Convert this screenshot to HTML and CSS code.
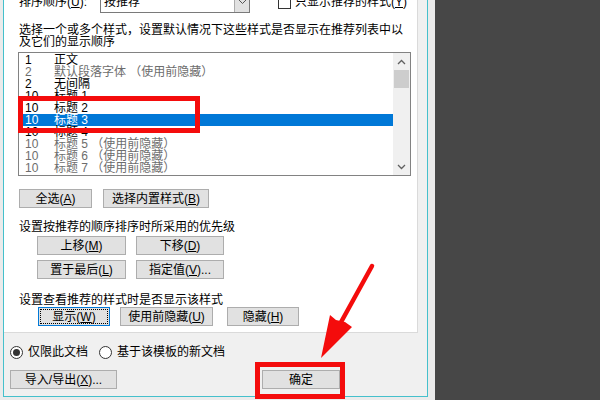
FILE: index.html
```html
<!DOCTYPE html>
<html lang="zh-CN">
<head>
<meta charset="utf-8">
<title>管理样式</title>
<link rel="stylesheet" href="styles.css">
</head>
<body>
<div class="screen">
  <div class="win">
    <div class="dialog">
      <div class="page">
        <div class="row-top">
          <span class="lbl-sort">排序顺序(<u>U</u>):</span>
          <div class="combo">
            <span class="combo-text">按推荐</span>
            <span class="combo-btn"><svg width="9" height="6" viewBox="0 0 9 6"><path d="M1 1l3.5 3.5L8 1" fill="none" stroke="#555" stroke-width="1"/></svg></span>
          </div>
          <div class="chk"><span class="box"></span><span>只显示推荐的样式(<u>Y</u>)</span></div>
        </div>
        <p class="desc">选择一个或多个样式，设置默认情况下这些样式是否显示在推荐列表中以<br>及它们的显示顺序</p>
        <div class="list">
          <div class="items">
            <div class="item"><span class="num">1</span><span>正文</span></div>
            <div class="item gray"><span class="num">2</span><span>默认段落字体 （使用前隐藏）</span></div>
            <div class="item"><span class="num">2</span><span>无间隔</span></div>
            <div class="item"><span class="num">10</span><span>标题 1</span></div>
            <div class="item"><span class="num">10</span><span>标题 2</span></div>
            <div class="item sel"><span class="num">10</span><span>标题 3</span></div>
            <div class="item"><span class="num">10</span><span>标题 4</span></div>
            <div class="item gray"><span class="num">10</span><span>标题 5 （使用前隐藏）</span></div>
            <div class="item gray"><span class="num">10</span><span>标题 6 （使用前隐藏）</span></div>
            <div class="item gray"><span class="num">10</span><span>标题 7 （使用前隐藏）</span></div>
          </div>
          <div class="vscroll">
            <div class="sb-arrow"><svg width="9" height="6" viewBox="0 0 9 6"><path d="M1 5l3.5-3.5L8 5" fill="none" stroke="#606060" stroke-width="1.3"/></svg></div>
            <div class="thumb"></div>
            <div class="sb-track"></div>
            <div class="sb-arrow"><svg width="9" height="6" viewBox="0 0 9 6"><path d="M1 1l3.5 3.5L8 1" fill="none" stroke="#606060" stroke-width="1.3"/></svg></div>
          </div>
        </div>
        <div class="row1">
          <div class="btn w73">全选(<u>A</u>)</div>
          <div class="btn w106">选择内置样式(<u>B</u>)</div>
        </div>
        <p class="lbl2">设置按推荐的顺序排序时所采用的优先级</p>
        <div class="grid">
          <div class="btn">上移(<u>M</u>)</div>
          <div class="btn">下移(<u>D</u>)</div>
          <div class="btn">置于最后(<u>L</u>)</div>
          <div class="btn">指定值(<u>V</u>)...</div>
        </div>
        <p class="lbl3">设置查看推荐的样式时是否显示该样式</p>
        <div class="row3">
          <div class="btn focus w72">显示(<u>W</u>)</div>
          <div class="btn w93 ml10">使用前隐藏(<u>U</u>)</div>
          <div class="btn w72 ml14">隐藏(<u>H</u>)</div>
        </div>
      </div>
      <div class="footer">
        <div class="radios">
          <span class="radio on"></span><span class="rtext">仅限此文档</span>
          <span class="radio r2"></span><span class="rtext">基于该模板的新文档</span>
        </div>
        <div class="bottom">
          <div class="btn w107">导入/导出(<u>X</u>)...</div>
          <div class="btn w78 ok">确定</div>
        </div>
      </div>
    </div>
  </div>
  <div class="dark"></div>
</div>
<div class="mark m1"></div>
<div class="mark m2"></div>
<svg class="arrow" width="600" height="400" viewBox="0 0 600 400">
  <line x1="372" y1="266" x2="340" y2="324" stroke="#f40c0c" stroke-width="4.5" stroke-linecap="round"/>
  <polygon points="321,358 330,315 336,320 345,322 352,327" fill="#f40c0c"/>
</svg>
</body>
</html>
```
FILE: styles.css
```css
* { box-sizing: border-box; margin: 0; padding: 0; }
html, body { width: 600px; height: 400px; overflow: hidden; }
body {
  font: 12px/12px "Liberation Sans", "Noto Sans CJK SC", sans-serif;
  color: #000;
  background: #474747;
  position: relative;
}
u { text-decoration: underline; text-underline-offset: 1px; }

.screen { display: flex; height: 400px; }
.win { width: 435px; flex: none; background: #ebebeb; padding: 0 7px 3px 3px; }
.dark { flex: 1; background: #474747; }

.dialog {
  height: 397px;
  border: 1px solid #45c0cc;
  border-top: 0;
  background: #f0f0f0;
  display: flex;
  flex-direction: column;
}

.page {
  height: 333px;
  width: 414px;
  flex: none;
  background: #fff;
  border-right: 1px solid #dadada;
  border-bottom: 1px solid #dadada;
  padding-left: 15px;
  overflow: hidden;
  white-space: nowrap;
}

.row-top { display: flex; align-items: center; height: 22px; margin-top: -9px; }
.lbl-sort { width: 81px; }
.combo {
  width: 150px; height: 21px;
  border: 1px solid #7a7a7a;
  background: #fff;
  display: flex; align-items: center;
}
.combo-text { flex: 1; padding-left: 3px; }
.combo-btn {
  width: 15px; height: 19px;
  background: #e1e1e1;
  border-left: 1px solid #acacac;
  display: flex; align-items: center; justify-content: center;
}
.chk { display: flex; align-items: center; margin-left: 28px; gap: 4px; }
.box { width: 13px; height: 13px; border: 1px solid #333; background: #fff; }

.desc { margin-top: 11px; }

.list {
  margin: 4px 0 0 -1px;
  width: 393px; height: 124px;
  border: 1px solid #828282;
  display: flex;
}
.items { width: 374px; padding-top: 1px; }
.item { height: 12px; display: flex; margin-left: 1px; padding-left: 5px; }
.num { width: 29px; }
.gray { color: #6d6d6d; }
.sel { background: #0078d7; color: #fff; }

.vscroll { width: 17px; background: #f0f0f0; display: flex; flex-direction: column; align-items: center; }
.sb-arrow { height: 17px; width: 100%; display: flex; align-items: center; justify-content: center; }
.thumb { width: 15px; height: 18px; background: #cdcdcd; }
.sb-track { flex: 1; }

.btn {
  height: 19px;
  background: #e1e1e1;
  border: 1px solid #adadad;
  display: flex; align-items: center; justify-content: center;
}
.btn.focus { border-color: #0078d7; outline: 1px dotted #000; outline-offset: -3px; }
.w72 { width: 72px; }
.w73 { width: 73px; }
.w78 { width: 78px; }
.w93 { width: 93px; }
.w106 { width: 106px; }
.w107 { width: 107px; }
.ml10 { margin-left: 10px; }
.ml14 { margin-left: 14px; }

.row1 { display: flex; gap: 11px; margin-top: 13px; }
.lbl2 { margin-top: 13px; }
.grid {
  display: grid;
  grid-template-columns: 89px 88px;
  column-gap: 10px;
  row-gap: 5px;
  margin: 3px 0 0 18px;
}
.lbl3 { margin-top: 15px; }
.row3 { display: flex; margin: 1px 0 0 19px; }

.footer { padding-left: 6px; white-space: nowrap; }
.radios { display: flex; align-items: center; height: 14px; margin-top: 12px; }
.radio {
  width: 13px; height: 13px;
  border: 1px solid #333;
  border-radius: 50%;
  background: #fff;
  display: flex; align-items: center; justify-content: center;
}
.radio.on::after { content: ""; width: 7px; height: 7px; border-radius: 50%; background: #333; }
.rtext { margin-left: 5px; }
.r2 { margin-left: 11px; }
.bottom { display: flex; margin-top: 11px; }
.ok { margin-left: 145px; }

.mark { position: absolute; border: 5px solid #f40c0c; }
.m1 { left: 18px; top: 96px; width: 182px; height: 37px; }
.m2 { left: 255px; top: 362px; width: 90px; height: 37px; }
.arrow { position: absolute; left: 0; top: 0; pointer-events: none; }
```
